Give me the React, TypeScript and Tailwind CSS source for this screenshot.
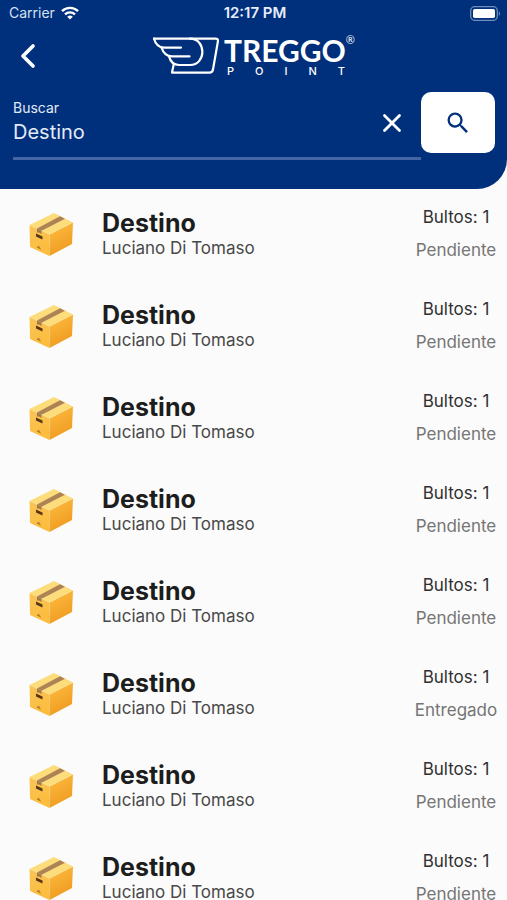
import { ChevronLeft, X } from "lucide-react";
import { MdSearch } from "react-icons/md";

type Envio = {
  id: number;
  titulo: string;
  nombre: string;
  bultos: number;
  estado: "Pendiente" | "Entregado";
};

const envios: Envio[] = Array.from({ length: 8 }, (_, i) => ({
  id: i + 1,
  titulo: "Destino",
  nombre: "Luciano Di Tomaso",
  bultos: 1,
  estado: i === 5 ? "Entregado" : "Pendiente",
}));

function IconoWifi() {
  return (
    <svg viewBox="0 0 18 14" className="w-[18px] h-[14px]" fill="none" stroke="currentColor" strokeWidth={2.4}>
      <path d="M1 5.2a11.4 11.4 0 0 1 16 0" />
      <path d="M4 8.4a7.2 7.2 0 0 1 10 0" />
      <path d="M9 13.6 6.2 10.8a4 4 0 0 1 5.6 0z" fill="currentColor" stroke="none" />
    </svg>
  );
}

function IconoBateria() {
  return (
    <svg viewBox="0 0 31 15" className="w-[31px] h-[15px]" fill="none">
      <rect x="0.7" y="0.7" width="26.6" height="13.6" rx="4" stroke="#6f8cb9" strokeWidth="1.3" />
      <rect x="3" y="3" width="22" height="9" rx="1.8" fill="#fff" />
      <path d="M28.8 5.2c1.6.6 1.6 4 0 4.6z" fill="#6f8cb9" />
    </svg>
  );
}

function BarraEstado() {
  return (
    <div className="grid grid-cols-3 items-center h-[26px] pl-[9px] pr-[6px]">
      <div className="flex items-center gap-[6px] text-sm text-[#d5e0f2]">
        <span>Carrier</span>
        <span className="text-white">
          <IconoWifi />
        </span>
      </div>
      <span className="text-center text-[15px] font-semibold text-[#e6eefb]">12:17 PM</span>
      <div className="flex justify-end">
        <IconoBateria />
      </div>
    </div>
  );
}

function Logo() {
  return (
    <div className="flex items-start gap-1 text-white">
      <svg
        viewBox="0 0 68 38"
        className="w-[68px] h-[38px] mt-[3px]"
        fill="none"
        stroke="currentColor"
        strokeWidth={2.2}
        strokeLinecap="round"
        strokeLinejoin="round"
      >
        <path d="M2 1.6H63.5Q66.4 1.6 65.9 4.5L61 32.5Q60.4 35.6 57.5 35.6H20L21.8 27" />
        <path d="M2 1.6C3.5 7.5 6.5 10.6 12 10.6H29" />
        <path d="M9.5 10.6C11.5 16.5 14.5 19.4 20 19.4H37.5" />
        <path d="M17 19.4C18.5 25 21.5 28 27 28H38C54.5 28 54.5 1.6 38 1.6" />
      </svg>
      <div className="flex flex-col">
        <span className="flex items-start font-['Lato',sans-serif]">
          <span className="text-[30px] leading-8 font-bold">TREGGO</span>
          <span className="text-[11px] leading-3">®</span>
        </span>
        <span className="flex justify-between pl-[3px] pr-[10px] text-[11px] leading-[10px] font-medium">
          {["P", "O", "I", "N", "T"].map((letra) => (
            <span key={letra}>{letra}</span>
          ))}
        </span>
      </div>
    </div>
  );
}

function Caja() {
  return (
    <svg viewBox="0 0 46 46" className="w-[46px] h-[46px]">
      <defs>
        <linearGradient id="frente" x1="0" y1="0" x2="0.3" y2="1">
          <stop offset="0" stopColor="#f6c659" />
          <stop offset="1" stopColor="#fdbc3c" />
        </linearGradient>
        <linearGradient id="lado" x1="0.2" y1="0" x2="0.6" y2="1">
          <stop offset="0" stopColor="#fdbd40" />
          <stop offset="1" stopColor="#ee981f" />
        </linearGradient>
      </defs>
      <path d="M1.5 14 21.5 23.5V45L3 36.5Q2 36 2 35z" fill="url(#frente)" />
      <path d="M21.5 23.5 45 11.5 44 33 21.5 45z" fill="url(#lado)" />
      <path d="M1.5 14 26 2 45 11.5 21.5 23.5z" fill="#fddc7c" />
      <path d="M9 17.5 32 5.2 37 7.7 13.5 19.8z" fill="#ad8355" />
      <path d="M9 17.5 13.5 19.8V23L11.2 21.4 9 21.4z" fill="#a1784c" />
      <path d="M8 22.5 14.5 25.5V28.5L8 25.5z" fill="#5c3516" />
      <path d="M8.5 36.5 10.8 34.5 13.3 38.8z" fill="#b9802f" />
    </svg>
  );
}

function FilaEnvio({ titulo, nombre, bultos, estado }: Envio) {
  return (
    <li className="flex items-start h-[92px] shrink-0 pl-7 pr-2">
      <div className="mt-[22px]">
        <Caja />
      </div>
      <div className="flex-1 min-w-0 pl-7 pt-[19px]">
        <h2 className="text-[25px] leading-[30px] font-bold text-[#1d1d1d]">{titulo}</h2>
        <p className="text-[17px] leading-5 text-[#484848]">{nombre}</p>
      </div>
      <div className="flex flex-col items-center w-[86px] pt-4 gap-[9px] text-[17px] leading-6">
        <span className="text-[#303030]">Bultos: {bultos}</span>
        <span className="text-[#757575]">{estado}</span>
      </div>
    </li>
  );
}

export default function App() {
  return (
    <div className="flex flex-col h-screen overflow-hidden bg-[#fbfbfb] font-['Inter',sans-serif]">
      <header className="shrink-0 bg-[#002f7b] text-white rounded-br-[30px]">
        <BarraEstado />
        <div className="grid grid-cols-[48px_1fr_48px] items-start h-[66px]">
          <button type="button" aria-label="Volver" className="flex justify-center pt-[10px] pl-2">
            <ChevronLeft size={40} strokeWidth={2.2} />
          </button>
          <div className="flex justify-center pt-2">
            <Logo />
          </div>
        </div>
        <form className="flex items-start pl-[13px] pr-3 pb-[29px]" onSubmit={(e) => e.preventDefault()}>
          <div className="flex flex-1 min-w-0 items-start h-[68px] border-b-[3px] border-[#4566a4]">
            <div className="flex flex-col flex-1 min-w-0 pt-[6px]">
              <label htmlFor="buscar" className="text-sm leading-5 text-[#e3ebf8]">
                Buscar
              </label>
              <input
                id="buscar"
                type="text"
                defaultValue="Destino"
                className="w-full h-7 bg-transparent text-xl text-[#e3ebf8] outline-none"
              />
            </div>
            <button type="button" aria-label="Borrar" className="pt-4 pr-[14px]">
              <X size={30} strokeWidth={2.2} />
            </button>
          </div>
          <button
            type="submit"
            aria-label="Buscar envíos"
            className="flex items-center justify-center w-[74px] h-[61px] rounded-[10px] bg-white text-[#002f7b]"
          >
            <MdSearch size={28} />
          </button>
        </form>
      </header>
      <ul className="flex flex-col flex-1 min-h-0 overflow-hidden">
        {envios.map((envio) => (
          <FilaEnvio key={envio.id} {...envio} />
        ))}
      </ul>
    </div>
  );
}
